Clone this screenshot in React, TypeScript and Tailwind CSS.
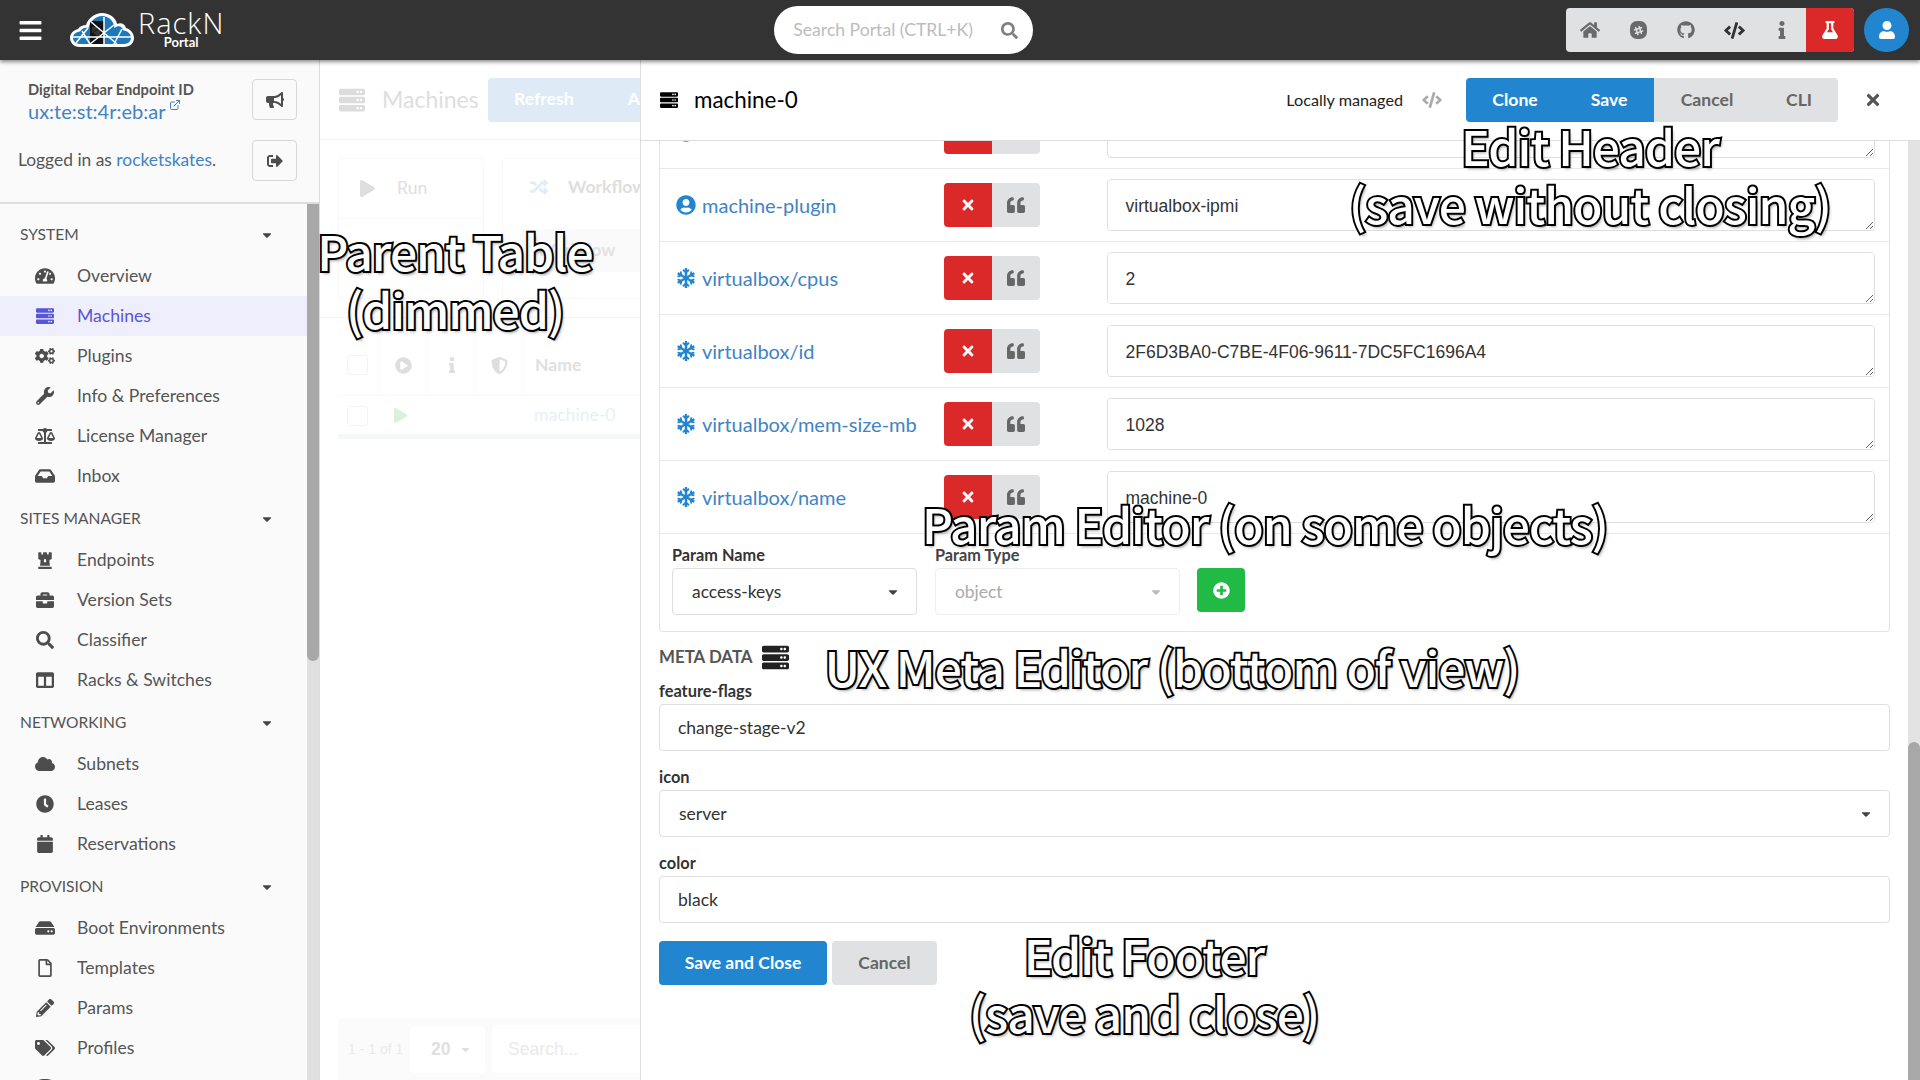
import React from "react";
import {
  FaBars, FaSearch, FaHome, FaSlackHash, FaGithub, FaCode, FaInfo, FaFlask, FaUser, FaBullhorn, FaSignOutAlt,
  FaCaretDown, FaTachometerAlt, FaServer, FaCogs, FaWrench, FaBalanceScale, FaInbox, FaChessRook, FaBriefcase,
  FaColumns, FaCloud, FaClock, FaCalendar, FaHdd, FaRegFile, FaPencilAlt, FaTags, FaTimes, FaQuoteLeft,
  FaSnowflake, FaPlusCircle, FaUserCircle, FaPlay, FaRandom, FaShieldAlt, FaPlayCircle, FaDatabase,
} from "react-icons/fa";
import { ExternalLink } from "lucide-react";

type NavItem = { label: string; icon: React.ReactNode; active?: boolean };
type Section = { title: string; items: NavItem[] };

const sections: Section[] = [
  {
    title: "SYSTEM",
    items: [
      { label: "Overview", icon: <FaTachometerAlt size={20} /> },
      { label: "Machines", icon: <FaServer size={18} />, active: true },
      { label: "Plugins", icon: <FaCogs size={22} /> },
      { label: "Info & Preferences", icon: <FaWrench size={18} /> },
      { label: "License Manager", icon: <FaBalanceScale size={22} /> },
      { label: "Inbox", icon: <FaInbox size={20} /> },
    ],
  },
  {
    title: "SITES MANAGER",
    items: [
      { label: "Endpoints", icon: <FaChessRook size={18} /> },
      { label: "Version Sets", icon: <FaBriefcase size={18} /> },
      { label: "Classifier", icon: <FaSearch size={18} /> },
      { label: "Racks & Switches", icon: <FaColumns size={18} /> },
    ],
  },
  {
    title: "NETWORKING",
    items: [
      { label: "Subnets", icon: <FaCloud size={22} /> },
      { label: "Leases", icon: <FaClock size={18} /> },
      { label: "Reservations", icon: <FaCalendar size={18} /> },
    ],
  },
  {
    title: "PROVISION",
    items: [
      { label: "Boot Environments", icon: <FaHdd size={20} /> },
      { label: "Templates", icon: <FaRegFile size={18} /> },
      { label: "Params", icon: <FaPencilAlt size={18} /> },
      { label: "Profiles", icon: <FaTags size={22} /> },
      { label: "Stages", icon: <FaDatabase size={18} /> },
    ],
  },
];

const params = [
  { name: "", value: "", icon: "user" },
  { name: "machine-plugin", value: "virtualbox-ipmi", icon: "user" },
  { name: "virtualbox/cpus", value: "2", icon: "snow" },
  { name: "virtualbox/id", value: "2F6D3BA0-C7BE-4F06-9611-7DC5FC1696A4", icon: "snow" },
  { name: "virtualbox/mem-size-mb", value: "1028", icon: "snow" },
  { name: "virtualbox/name", value: "machine-0", icon: "snow" },
];

function Logo() {
  return (
    <svg width="64" height="36" viewBox="0 0 64 36" className="ml-[17px] mt-[1px] shrink-0">
      <path d="M10 34 C3 34 0 29 0 25 C0 20 4 17 8 16 C10 13 13 12 16 12 C18 5 25 0 32 0 C40 0 46 5 47 11 C51 9 55 11 56 15 C60 16 64 20 64 25 C64 30 60 34 54 34 Z" fill="#fff" />
      <path d="M10 31 C6 31 3 28 3 25 C3 21 6 19 10 18.500 C12 15 15 14 18.500 15 C20 8 26 3 32 3 C39 3 44 8 44.500 15 C48 12 52 13 53.500 17.500 C58 18 61 21 61 25 C61 28 58 31 54 31 Z" fill="#1c78b8" />
      <path d="M20 8 H34 V31 H20 Z" fill="#111" />
      <path d="M22 14 H30 L22 20 Z M30 15 V25 L23 20 Z" fill="#333" />
      <path d="M3 24 H61 M20 8 L47 31 M20 31 L44 12 M34 4 V31 M12 18 L20 31 M6 30 L18 15 M52 16 L44 31" stroke="#fff" strokeWidth="1.500" fill="none" />
    </svg>
  );
}

function TopBar() {
  const grey = "w-[48px] h-[44px] flex items-center justify-center text-[#6a6a6a]";
  return (
    <header className="h-[60px] shrink-0 bg-[#333333] flex items-center relative z-10 shadow-[0_2px_4px_rgba(0,0,0,0.45)]">
      <FaBars size={25} className="ml-[18px] text-white shrink-0" />
      <div className="ml-[10px] flex items-center">
        <Logo />
        <div className="ml-[4px] flex flex-col items-center text-white -mt-[2px]">
          <span className="text-[29px] leading-[26px] font-light tracking-[1px] [font-family:'Open_Sans',sans-serif]">RackN</span>
          <span className="text-[13px] leading-[12px] font-bold">Portal</span>
        </div>
      </div>
      <div className="ml-[550px] w-[259px] h-[48px] rounded-full bg-white flex items-center pl-[19px] pr-[15px] shrink-0">
        <span className="text-[17.6px] text-[#bcbcbc]">Search Portal (CTRL+K)</span>
        <FaSearch size={17} className="ml-auto text-[#808080]" />
      </div>
      <div className="ml-[533px] w-[288px] h-[44px] rounded-[4px] bg-[#e0e1e2] flex overflow-hidden shrink-0">
        <div className={grey}><FaHome size={20} /></div>
        <div className={grey}>
          <div className="w-[17px] h-[18px] rounded-[7px] bg-[#6a6a6a] flex items-center justify-center text-[#e0e1e2]"><FaSlackHash size={11} /></div>
        </div>
        <div className={grey}><FaGithub size={18} /></div>
        <div className="w-[48px] h-[44px] flex items-center justify-center text-[#333]"><FaCode size={21} /></div>
        <div className={grey}><FaInfo size={18} /></div>
        <div className="w-[48px] h-[44px] flex items-center justify-center bg-[#db2828] text-white"><FaFlask size={18} /></div>
      </div>
      <div className="ml-[10px] w-[45px] h-[44px] rounded-full bg-[#2185d0] flex items-center justify-center text-white shrink-0"><FaUser size={18} /></div>
    </header>
  );
}

function SideButton({ children }: { children: React.ReactNode }) {
  return (
    <div className="w-[45px] h-[41px] rounded-[4px] border border-[#d8d8d8] bg-[#fafafa] flex items-center justify-center text-[#4d4d4d] shrink-0">
      {children}
    </div>
  );
}

function Sidebar() {
  return (
    <aside className="w-[320px] shrink-0 bg-[#fafafa] border-r border-[#dddddd] flex flex-col overflow-hidden">
      <div className="h-[144px] shrink-0 border-b-2 border-[#dddddd] pr-[22px] pt-[19px]">
        <div className="flex items-start pl-[28px] h-[41px]">
          <div>
            <div className="text-[14.7px] leading-[20px] font-bold text-[#555] whitespace-nowrap">Digital Rebar Endpoint ID</div>
            <div className="text-[20px] leading-[24px] text-[#4183c4] flex items-start whitespace-nowrap">
              ux:te:st:4r:eb:ar
              <ExternalLink size={12} strokeWidth={2} className="ml-[4px]" />
            </div>
          </div>
          <div className="ml-auto"><SideButton><FaBullhorn size={18} /></SideButton></div>
        </div>
        <div className="flex items-center pl-[18px] mt-[20px]">
          <div className="text-[17.4px] text-[#555] whitespace-nowrap">Logged in as <span className="text-[#4183c4]">rocketskates</span>.</div>
          <div className="ml-auto"><SideButton><FaSignOutAlt size={16} /></SideButton></div>
        </div>
      </div>
      <div className="flex-1 flex min-h-0">
        <nav className="flex-1 overflow-hidden pt-[8px] min-w-0">
          {sections.map((s) => (
            <div key={s.title}>
              <div className="h-[40px] my-[2px] pt-[1px] flex items-center justify-between pl-[20px] pr-[33px] text-[15.6px] text-[#555]">
                <span>{s.title}</span>
                <FaCaretDown size={14} className="text-[#444]" />
              </div>
              {s.items.map((i) => (
                <div key={i.label} className={"h-[40px] flex items-center pl-[35px] text-[17.6px] " + (i.active ? "bg-[#eeeefc] text-[#5a55d6]" : "text-[#555]")}>
                  <span className={"w-[20px] flex justify-center shrink-0 " + (i.active ? "text-[#5a55d6]" : "text-[#4d4d4d]")}>{i.icon}</span>
                  <span className="ml-[22px]">{i.label}</span>
                </div>
              ))}
            </div>
          ))}
        </nav>
        <div className="w-[12px] shrink-0 bg-[#e0e0e0]">
          <div className="h-[457px] bg-[#a8a8a8] rounded-b-full rounded-t-[6px]"></div>
        </div>
      </div>
    </aside>
  );
}

function Dimmed() {
  return (
    <section className="w-[320px] shrink-0 bg-white overflow-hidden flex flex-col relative">
      <div className="h-[80px] shrink-0 border-b border-[#f5f5f5] flex items-center pl-[19px]">
        <FaServer size={26} className="text-[#dcdcdc] shrink-0" />
        <span className="ml-[17px] w-[106px] shrink-0 text-[23px] text-[#dedede] whitespace-nowrap">Machines</span>
        <div className="h-[44px] w-[200px] shrink-0 rounded-[4px] bg-[#deebf6] flex items-center pl-[26px] text-[17.6px] font-bold text-white gap-[54px]">
          <span>Refresh</span><span>Actions</span>
        </div>
      </div>
      <div className="h-[178px] shrink-0 border-b border-[#f5f5f5] flex gap-[18px] pl-[18px] pt-[18px]">
        <div className="w-[146px] h-[141px] shrink-0 rounded-[4px] border border-[#f7f7f7]">
          <div className="h-[60px] border-b border-[#f8f8f8] flex items-center pl-[20px] text-[#dedede]">
            <FaPlay size={17} /><span className="ml-[21px] text-[17.6px]">Run</span>
          </div>
        </div>
        <div className="w-[200px] h-[141px] shrink-0 rounded-[4px] border border-[#f7f7f7] pl-[18px]">
          <div className="h-[56px] flex items-center pl-[9px]">
            <FaRandom size={18} className="text-[#e1edf7]" />
            <span className="ml-[20px] text-[17.6px] font-bold text-[#dedede]">Workflow</span>
          </div>
          <div className="mt-[14px] h-[43px] bg-[#fafafa] rounded-[4px] flex items-center pl-[16px] text-[17.6px] font-bold text-[#e2e2e2]">Workflow</div>
        </div>
      </div>
      <div className="ml-[18px] mt-[11px] h-[67px] border-b border-[#f7f7f7] flex items-center shrink-0">
        <div className="w-[42px] h-[67px] border-r border-[#f8f8f8] pl-[9px] pt-[6px] flex items-center"><div className="w-[21px] h-[20px] rounded-[3px] border border-[#f3f3f3]"></div></div>
        <div className="w-[48px] h-[67px] border-r border-[#f8f8f8] pt-[6px] flex items-center justify-center"><FaPlayCircle size={17} className="text-[#dedede]" /></div>
        <div className="w-[48px] h-[67px] border-r border-[#f8f8f8] pt-[6px] flex items-center justify-center"><FaInfo size={16} className="text-[#dedede]" /></div>
        <div className="w-[48px] h-[67px] border-r border-[#f8f8f8] pt-[6px] flex items-center justify-center"><FaShieldAlt size={17} className="text-[#dedede]" /></div>
        <span className="ml-[11px] pt-[6px] text-[17.6px] font-bold text-[#e0e0e0]">Name</span>
      </div>
      <div className="ml-[18px] h-[38px] pt-[1px] flex items-center shrink-0">
        <div className="ml-[9px] w-[21px] h-[20px] rounded-[3px] border border-[#f3f3f3] shrink-0"></div>
        <FaPlay size={15} className="ml-[25px] text-[#d7f3dd] shrink-0" />
        <span className="ml-[126px] text-[17.6px] text-[#e6eff8] whitespace-nowrap">machine-0</span>
      </div>
      <div className="ml-[18px] h-[5px] bg-[#f5f7fb] shrink-0"></div>
      <div className="mt-auto ml-[18px] h-[62px] bg-[#fbfbfb] rounded-t-[4px] flex items-center pl-[10px] shrink-0">
        <span className="text-[14px] text-[#eaeaea] w-[62px] shrink-0 whitespace-nowrap [font-family:'Liberation_Sans',sans-serif]">1 - 1 of 1</span>
        <div className="w-[75px] h-[47px] bg-white rounded-[4px] flex items-center pl-[21px] text-[17.6px] font-bold text-[#e0e0e0] shrink-0 [font-family:'Liberation_Sans',sans-serif]">
          20<FaCaretDown size={13} className="ml-[8px]" />
        </div>
        <div className="ml-[7px] w-[200px] h-[48px] bg-white rounded-[4px] flex items-center pl-[16px] text-[17.6px] text-[#eaeaea] shrink-0 [font-family:'Liberation_Sans',sans-serif]">Search...</div>
      </div>
    </section>
  );
}

function ParamRow({ name, value, icon }: { name: string; value: string; icon: string }) {
  return (
    <div className="h-[73px] border-b border-[#e8e8e8] flex items-center pl-[16px] pr-[14px]">
      <div className="w-[268px] flex items-center text-[#2185d0] shrink-0">
        {icon === "snow" ? <FaSnowflake size={20} /> : <FaUserCircle size={20} />}
        <span className="ml-[6px] text-[20px] text-[#4183c4] whitespace-nowrap">{name}</span>
      </div>
      <div className="flex w-[96px] h-[44px] rounded-[4px] overflow-hidden shrink-0">
        <div className="w-[48px] bg-[#db2828] flex items-center justify-center text-white"><FaTimes size={16} /></div>
        <div className="w-[48px] bg-[#e0e1e2] flex items-center justify-center text-[#666]"><FaQuoteLeft size={18} /></div>
      </div>
      <textarea
        readOnly
        defaultValue={value}
        className="ml-[67px] flex-1 min-w-0 h-[52px] rounded-[4px] border border-[#dedede] bg-white px-[17.500px] py-[16px] text-[17.5px] leading-[20px] text-[#333] resize-y outline-none [font-family:'Liberation_Sans',sans-serif]"
      />
    </div>
  );
}

function Select({ value, disabled }: { value: string; disabled?: boolean }) {
  return (
    <div className={"w-[245px] h-[47px] pt-[1px] rounded-[4px] border flex items-center pl-[19px] pr-[16px] text-[17.4px] " + (disabled ? "border-[#eeeeee] text-[#aaa]" : "border-[#dedede] text-[#333]")}>
      {value}
      <FaCaretDown size={14} className={"ml-auto " + (disabled ? "text-[#bbb]" : "text-[#444]")} />
    </div>
  );
}

function Field({ label, children, top }: { label: string; children: React.ReactNode; top: string }) {
  return (
    <div className={top}>
      <div className="h-[20px] mb-[3px] text-[16.4px] leading-[20px] font-bold text-[#333]">{label}</div>
      {children}
    </div>
  );
}

function Panel() {
  const box = "h-[47px] pt-[1px] rounded-[4px] border border-[#dedede] flex items-center pr-[16px] text-[17.5px] text-[#333]";
  return (
    <section className="flex-1 min-w-0 bg-white border-l border-[#dddddd] flex flex-col overflow-hidden">
      <div className="h-[81px] shrink-0 border-b border-[#dddddd] flex items-center pl-[19px] pr-[12px]">
        <FaServer size={18} className="text-black shrink-0" />
        <span className="ml-[16px] text-[22.4px] text-black">machine-0</span>
        <span className="ml-auto text-[16.2px] text-[#222]">Locally managed</span>
        <FaCode size={20} className="ml-[19px] text-[#aaaaaa]" />
        <div className="ml-[24px] flex h-[44px] w-[372px] rounded-[4px] overflow-hidden text-[17.6px] font-bold shrink-0">
          <div className="w-[98px] bg-[#2185d0] text-white flex items-center justify-center">Clone</div>
          <div className="w-[90px] bg-[#2185d0] text-white flex items-center justify-center">Save</div>
          <div className="w-[106px] bg-[#e0e1e2] text-[#666] flex items-center justify-center">Cancel</div>
          <div className="w-[78px] bg-[#e0e1e2] text-[#666] flex items-center justify-center">CLI</div>
        </div>
        <div className="w-[70px] flex justify-center text-[#555]"><FaTimes size={18} /></div>
      </div>
      <div className="flex-1 min-h-0 flex">
        <div className="flex-1 min-w-0 overflow-hidden px-[18px]">
          <div className="-mt-[45px] border-x border-b border-[#e3e3e3] rounded-b-[4px] pb-[16px]">
            {params.map((p, i) => <ParamRow key={i} {...p} />)}
            <div className="flex pl-[12px] pt-[11px] items-end">
              <div>
                <div className="h-[20px] mb-[3px] text-[16.3px] leading-[20px] font-bold text-[#333]">Param Name</div>
                <Select value="access-keys" />
              </div>
              <div className="ml-[18px]">
                <div className="h-[20px] mb-[3px] text-[16.3px] leading-[20px] font-bold text-[#444]">Param Type</div>
                <Select value="object" disabled />
              </div>
              <div className="ml-[17px] mb-[3px] w-[48px] h-[44px] rounded-[4px] bg-[#21ba45] flex items-center justify-center text-white"><FaPlusCircle size={17} /></div>
            </div>
          </div>
          <div className="mt-[13px] h-[24px] flex items-center text-[16.9px] font-bold text-[#555]">
            META DATA
            <FaServer size={27} className="ml-[9px] text-[#222]" />
          </div>
          <Field label="feature-flags" top="mt-[12px]"><div className={box + " pl-[18px]"}>change-stage-v2</div></Field>
          <Field label="icon" top="mt-[16px]">
            <div className={box + " pl-[19px]"}>server<FaCaretDown size={14} className="ml-auto text-[#444]" /></div>
          </Field>
          <Field label="color" top="mt-[16px]"><div className={box + " pl-[18px]"}>black</div></Field>
          <div className="mt-[18px] flex gap-[5px] text-[17.5px] font-bold">
            <div className="w-[168px] h-[44px] rounded-[4px] bg-[#2185d0] text-white flex items-center justify-center">Save and Close</div>
            <div className="w-[105px] h-[44px] rounded-[4px] bg-[#e0e1e2] text-[#666] flex items-center justify-center">Cancel</div>
          </div>
        </div>
        <div className="w-[12px] shrink-0 bg-[#e3e3e3] flex flex-col">
          <div className="mt-[601px] flex-1 bg-[#a8a8a8] rounded-t-full"></div>
        </div>
      </div>
    </section>
  );
}

function Note({ className, children }: { className: string; children: React.ReactNode }) {
  return (
    <div className={"absolute whitespace-nowrap text-center -translate-x-1/2 text-white text-[48px] leading-[58px] font-medium tracking-[-1px] [font-family:'Noto_Sans_CJK_SC',sans-serif] [-webkit-text-stroke:4px_black] [paint-order:stroke_fill] [text-shadow:2px_3px_3px_rgba(0,0,0,0.35)] " + className}>
      {children}
    </div>
  );
}

export default function App() {
  return (
    <div className="relative w-[1920px] h-[1080px] overflow-hidden flex flex-col bg-white [font-family:Lato,sans-serif]">
      <TopBar />
      <div className="flex-1 min-h-0 flex">
        <Sidebar />
        <Dimmed />
        <Panel />
      </div>
      <Note className="left-[455px] top-[221px]">Parent Table<br />(dimmed)</Note>
      <Note className="left-[1590px] top-[116px]">Edit Header<br />(save without closing)</Note>
      <Note className="left-[1265px] top-[494px]">Param Editor (on some objects)</Note>
      <Note className="left-[1172px] top-[637px]">UX Meta Editor (bottom of view)</Note>
      <Note className="left-[1144px] top-[925px]">Edit Footer<br />(save and close)</Note>
    </div>
  );
}
